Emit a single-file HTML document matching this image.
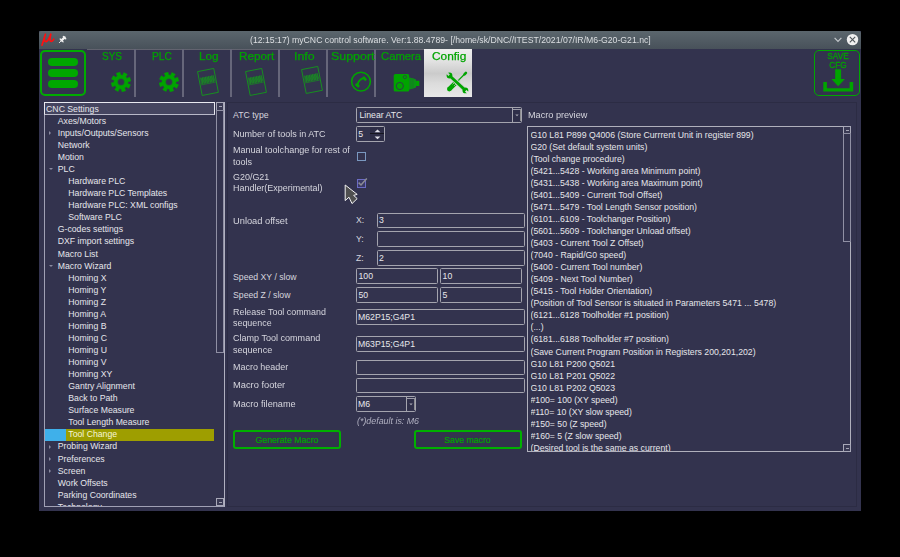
<!DOCTYPE html>
<html><head><meta charset="utf-8">
<style>
html,body{margin:0;padding:0;}
body{width:900px;height:557px;background:#000;position:relative;overflow:hidden;font-family:"Liberation Sans",sans-serif;}
.a{position:absolute;}
#win{left:39px;top:31px;width:822px;height:480px;background:#33334e;}
#title{left:39px;top:31px;width:822px;height:18px;background:linear-gradient(#5b666d,#48515a);border-radius:2px 2px 0 0;}
#ttext{left:250px;top:34.4px;font-size:8.7px;line-height:12px;color:#dcdfe2;will-change:transform;white-space:pre;}
.tabline{left:87px;top:48.5px;width:337px;height:1.5px;background:#62636f;}
.sep{top:49px;width:2px;height:48px;background:#66667a;}
.tl{top:49.2px;font-size:11.5px;line-height:14px;color:#00a400;white-space:pre;-webkit-text-stroke:0.25px #00a400;}
#cfgtab{left:424px;top:49px;width:48px;height:48px;background:linear-gradient(#eeeeee 0%,#e2e2e2 25%,#cbcbcb 51%,#dcdcdc 72%,#e8e8e8 100%);}
#menu{left:40px;top:49.5px;width:42px;height:42.5px;border:2px solid #00ad00;border-radius:5px;}
.bar{left:48px;width:30px;height:8px;border-radius:4px;background:#00a800;}
#save{left:813.8px;top:49.8px;width:46px;height:46px;box-sizing:border-box;border:1.8px solid #00a800;border-radius:5px;}
.t{position:absolute;font-size:8.7px;line-height:12px;color:#d6d6de;white-space:pre;}
.inp{position:absolute;border:1px solid #a4a4ae;border-radius:1.5px;box-sizing:border-box;}
.arr{width:0;height:0;border-left:2.5px solid #8a8aa0;border-top:2px solid transparent;border-bottom:2px solid transparent;}
.arrd{width:0;height:0;border-top:2.5px solid #8a8aa0;border-left:2px solid transparent;border-right:2px solid transparent;}
.tr{color:#e6e6ec;}
.it{position:absolute;font-size:8.7px;line-height:12px;color:#e8e8ec;white-space:pre;}
</style></head><body>
<div id="win" class="a"></div>
<div id="title" class="a"></div>
<!-- mu logo -->
<svg class="a" style="left:39px;top:31px" width="18" height="17" viewBox="39 31 18 17"><path d="M42,45.2 L45.4,34.2 M44.4,37.6 C43.6,40.6 45,42 46.6,41.4 C48.4,40.6 49.6,37 50.8,34.2 M50.8,34.2 C50,37.4 49.6,40.2 50.6,41.2 C51.4,41.9 52.8,41 53.8,39.2" stroke="#ff1010" stroke-width="1.7" fill="none" stroke-linecap="round"/></svg>
<svg class="a" style="left:56px;top:33px" width="12" height="12" viewBox="56 33 12 12"><g stroke="#f0f0f0" stroke-linecap="round" fill="none"><path d="M59.3,42.7 L61.4,40.6" stroke-width="0.9"/><path d="M60.2,39 L63.1,41.9" stroke-width="1.3"/><path d="M61.6,40.4 L64.6,37.4" stroke-width="2.2"/><path d="M63.4,36.4 L65.7,38.7" stroke-width="1.4"/></g></svg>
<div id="ttext" class="a">(12:15:17) myCNC control software. Ver:1.88.4789- [/home/sk/DNC//ITEST/2021/07/IR/M6-G20-G21.nc]</div>
<svg class="a" style="left:834px;top:37px" width="8" height="6" viewBox="0 0 8 6"><path d="M0.6,0.8 L4,4.4 L7.4,0.8" stroke="#c4c8cc" stroke-width="1.2" fill="none"/></svg>
<svg class="a" style="left:846px;top:33px" width="13" height="13" viewBox="0 0 13 13"><circle cx="6.5" cy="6.6" r="5.7" fill="#f0f0f0"/><path d="M3.8,3.9 L9.2,9.3 M9.2,3.9 L3.8,9.3" stroke="#4e5458" stroke-width="1.1"/></svg>

<!-- menu button -->
<div id="menu" class="a"></div>
<div class="a bar" style="top:58px"></div>
<div class="a bar" style="top:69px"></div>
<div class="a bar" style="top:80px"></div>

<!-- tabs -->
<div class="a tabline"></div>
<div class="a sep" style="left:134px"></div>
<div class="a sep" style="left:182px"></div>
<div class="a sep" style="left:230px"></div>
<div class="a sep" style="left:278px"></div>
<div class="a sep" style="left:326px"></div>
<div class="a sep" style="left:374px"></div>
<div id="cfgtab" class="a"></div>
<div class="a tl" style="left:102px;transform:scaleX(0.87);transform-origin:0 0">SYS</div>
<div class="a tl" style="left:151.5px;transform:scaleX(0.886);transform-origin:0 0">PLC</div>
<div class="a tl" style="left:198.5px;transform:scaleX(1.02);transform-origin:0 0">Log</div>
<div class="a tl" style="left:238.5px;transform:scaleX(1.02);transform-origin:0 0">Report</div>
<div class="a tl" style="left:294.2px;transform:scaleX(1.08);transform-origin:0 0">Info</div>
<div class="a tl" style="left:330.5px;transform:scaleX(1.08);transform-origin:0 0">Support</div>
<div class="a tl" style="left:380.5px;transform:scaleX(0.98);transform-origin:0 0">Camera</div>
<div class="a tl" style="left:431.5px;transform:scaleX(1.03);transform-origin:0 0">Config</div>

<!-- gears -->
<svg class="a" style="left:110.5px;top:72px" width="20" height="20" viewBox="0 0 20 20"><path fill="#00a400" stroke="#00a400" stroke-width="0.5" stroke-linejoin="round" fill-rule="evenodd" d="M6.40,4.00 L5.31,1.28 L9.01,0.15 L9.63,3.01 L11.70,3.21 L12.85,0.52 L16.26,2.33 L14.68,4.79 L16.00,6.40 L18.72,5.31 L19.85,9.01 L16.99,9.63 L16.79,11.70 L19.48,12.85 L17.67,16.26 L15.21,14.68 L13.60,16.00 L14.69,18.72 L10.99,19.85 L10.37,16.99 L8.30,16.79 L7.15,19.48 L3.74,17.67 L5.32,15.21 L4.00,13.60 L1.28,14.69 L0.15,10.99 L3.01,10.37 L3.21,8.30 L0.52,7.15 L2.33,3.74 L4.79,5.32Z M13.5,10 A3.5,3.5 0 1,0 6.5,10 A3.5,3.5 0 1,0 13.5,10Z"/></svg>
<svg class="a" style="left:158.5px;top:72px" width="20" height="20" viewBox="0 0 20 20"><path fill="#00a400" stroke="#00a400" stroke-width="0.5" stroke-linejoin="round" fill-rule="evenodd" d="M6.40,4.00 L5.31,1.28 L9.01,0.15 L9.63,3.01 L11.70,3.21 L12.85,0.52 L16.26,2.33 L14.68,4.79 L16.00,6.40 L18.72,5.31 L19.85,9.01 L16.99,9.63 L16.79,11.70 L19.48,12.85 L17.67,16.26 L15.21,14.68 L13.60,16.00 L14.69,18.72 L10.99,19.85 L10.37,16.99 L8.30,16.79 L7.15,19.48 L3.74,17.67 L5.32,15.21 L4.00,13.60 L1.28,14.69 L0.15,10.99 L3.01,10.37 L3.21,8.30 L0.52,7.15 L2.33,3.74 L4.79,5.32Z M13.5,10 A3.5,3.5 0 1,0 6.5,10 A3.5,3.5 0 1,0 13.5,10Z"/></svg>
<!-- docs -->
<svg class="a" style="left:195px;top:66px" width="26" height="32" viewBox="0 0 26 32"><g transform="translate(12.98,15.95) rotate(-11)" stroke="#16921e" fill="none"><rect x="-8.25" y="-12.15" width="16.5" height="24.3" stroke-width="0.9"/><path d="M-7,0.9 L-6.22,-5.5 L-5.44,0.9 L-4.66,-5.5 L-3.88,0.9 L-3.10,-5.5 L-2.32,0.9 L-1.54,-5.5 L-0.76,0.9 L0.02,-5.5 L0.80,0.9 L1.58,-5.5 L2.36,0.9 L3.14,-5.5 L3.92,0.9 L4.70,-5.5 L5.48,0.9 L6.26,-5.5 L7.04,0.9" stroke-width="0.7"/><path d="M-7.4,1.6 H7.6" stroke-width="0.6"/></g></svg>
<svg class="a" style="left:243px;top:66px" width="26" height="32" viewBox="0 0 26 32"><g transform="translate(12.98,15.95) rotate(-11)" stroke="#16921e" fill="none"><rect x="-8.25" y="-12.15" width="16.5" height="24.3" stroke-width="0.9"/><path d="M-7,0.9 L-6.22,-5.5 L-5.44,0.9 L-4.66,-5.5 L-3.88,0.9 L-3.10,-5.5 L-2.32,0.9 L-1.54,-5.5 L-0.76,0.9 L0.02,-5.5 L0.80,0.9 L1.58,-5.5 L2.36,0.9 L3.14,-5.5 L3.92,0.9 L4.70,-5.5 L5.48,0.9 L6.26,-5.5 L7.04,0.9" stroke-width="0.7"/><path d="M-7.4,1.6 H7.6" stroke-width="0.6"/></g></svg>
<svg class="a" style="left:299px;top:64px" width="26" height="32" viewBox="0 0 26 32"><g transform="translate(12.98,15.95) rotate(-11)" stroke="#16921e" fill="none"><rect x="-8.25" y="-12.15" width="16.5" height="24.3" stroke-width="0.9"/><path d="M-7,0.9 L-6.22,-5.5 L-5.44,0.9 L-4.66,-5.5 L-3.88,0.9 L-3.10,-5.5 L-2.32,0.9 L-1.54,-5.5 L-0.76,0.9 L0.02,-5.5 L0.80,0.9 L1.58,-5.5 L2.36,0.9 L3.14,-5.5 L3.92,0.9 L4.70,-5.5 L5.48,0.9 L6.26,-5.5 L7.04,0.9" stroke-width="0.7"/><path d="M-7.4,1.6 H7.6" stroke-width="0.6"/></g></svg>
<!-- support -->
<svg class="a" style="left:346px;top:68px" width="30" height="28" viewBox="346 68 30 28"><circle cx="361" cy="81.6" r="9.4" stroke="#00a400" stroke-width="1.6" fill="none"/><g fill="#00a400"><path d="M357.6,85 Q358.2,79.6 364,77.9" stroke="#00a400" stroke-width="2" fill="none"/><rect x="-2.3" y="-1.4" width="4.6" height="2.8" rx="0.9" transform="translate(364.6,78.6) rotate(50)"/><rect x="-2.3" y="-1.4" width="4.6" height="2.8" rx="0.9" transform="translate(357.4,85.4) rotate(40)"/></g></svg>
<!-- camera -->
<svg class="a" style="left:392px;top:73px" width="29" height="20" viewBox="0 0 29 20"><rect x="1.7" y="1.1" width="15.5" height="17.4" rx="1.6" fill="#00a400"/><circle cx="7.8" cy="13" r="3.6" fill="none" stroke="#33334e" stroke-width="0.9"/><circle cx="12.9" cy="4.1" r="1.6" fill="none" stroke="#33334e" stroke-width="0.7"/><path d="M17.2,4.4 L21,5.2 L23.9,6.6 V14.6 L21,15.6 L17.2,16.6Z" fill="#0a9a14"/><path d="M18.7,4.8 V16.2 M20.2,5 V15.9 M21.7,5.4 V15.5" stroke="#1a6f28" stroke-width="0.6"/><rect x="23.9" y="7.8" width="3.4" height="5.2" fill="#00a400"/></svg>
<!-- config -->
<svg class="a" style="left:442px;top:68px" width="30" height="28" viewBox="442 68 30 28"><defs><mask id="wm" maskUnits="userSpaceOnUse" x="442" y="68" width="30" height="28"><rect x="442" y="68" width="30" height="28" fill="#fff"/><rect x="-1.05" y="-4.5" width="2.1" height="4.3" fill="#000" transform="translate(449.3,75.3) rotate(-45)"/><rect x="-1.05" y="-4.5" width="2.1" height="4.3" fill="#000" transform="translate(465.6,90.6) rotate(135)"/></mask></defs>
<g stroke-linecap="round" fill="none">
<path d="M465.9,72.9 L464.5,74.3" stroke="#00a400" stroke-width="2.6"/>
<path d="M465,73.8 L458.4,80.4" stroke="#00a400" stroke-width="1.3"/>
<path d="M455.6,82.8 L449.3,89.1" stroke="#00a400" stroke-width="4.6" stroke-linecap="butt"/>
<circle cx="449.3" cy="89.1" r="2.3" fill="#00a400" stroke="none"/>
<path d="M454.4,82.6 L452.6,84.4 M455.9,84.1 L454.1,85.9" stroke="#d2d2d2" stroke-width="0.7" stroke-linecap="butt"/>
<path d="M451.3,77.3 L463.7,88.7" stroke="#d0d0d0" stroke-width="4.6" stroke-linecap="butt"/>
</g>
<g mask="url(#wm)" fill="#00a400"><path d="M451.3,77.3 L463.7,88.7" stroke="#00a400" stroke-width="2.9"/><circle cx="449.5" cy="75.5" r="2.9"/><circle cx="465.4" cy="90.4" r="2.9"/></g>
<path d="M457.2,79.6 L459.4,81.6 M458,78.8 L460.2,80.8" stroke="#7fc87f" stroke-width="0.5"/>
</svg>
<!-- save cfg -->
<div id="save" class="a"></div>
<div class="a" style="left:817.5px;top:51.6px;font-size:9.8px;line-height:8.9px;color:#00a400;text-align:center;width:40px;transform:scaleX(0.84);-webkit-text-stroke:0.3px #00a400;">SAVE<br>CFG</div>
<svg class="a" style="left:822px;top:68px" width="32" height="25" viewBox="0 0 32 25"><path d="M13.2,1.2 H19.1 V11 H22.9 L16.15,18.2 L9.4,11 H13.2Z" fill="#00a400"/><path d="M1.3,14 H4.9 V20.2 H27.6 V14 H31.2 V23.6 H1.3Z" fill="#00a400"/></svg>

<!-- content frame -->
<div class="a" style="left:227px;top:102px;width:628px;height:403px;border:1px solid #2c2c44;"></div>
<!-- tree -->
<div class="a" style="left:44px;top:102px;width:178.5px;height:403.5px;border:1px solid #a0a0b4;border-right:1.3px solid #b0b0c0;border-top:none;"></div>
<div class="a" style="left:44px;top:102px;width:171px;height:13px;box-sizing:border-box;border:1.3px solid #e8e8f0;border-bottom-color:#b8b8c8;background:#454560;"></div>
<div class="a" style="left:44.5px;top:428.9px;width:21.7px;height:11.8px;background:#3fb0ea;"></div>
<div class="a" style="left:66.2px;top:428.9px;width:148.3px;height:11.8px;background:#9e9e00;"></div>
<!-- tree scrollbar -->
<div class="a" style="left:216px;top:102px;width:8.3px;height:8.5px;box-sizing:border-box;border:1px solid #a8a8b8;background:#3a3a54;"></div>
<div class="a" style="left:219px;top:105.8px;width:3px;height:1px;background:#a4a4b4;"></div>
<div class="a" style="left:216px;top:110px;width:8px;height:243px;box-sizing:border-box;border:1px solid #9090a4;"></div>
<div class="a" style="left:216px;top:498.2px;width:8.3px;height:8.3px;box-sizing:border-box;border:1px solid #a8a8b8;background:#3a3a54;"></div>
<div class="a" style="left:219px;top:502px;width:3px;height:1px;background:#a4a4b4;"></div>
<div class="a" style="left:44px;top:115px;width:172px;height:390.5px;overflow:hidden;">
<div class="a" style="left:-44px;top:-115px;width:300px;height:520px;">

<div class="t tr" style="left:57.8px;top:114.86px">Axes/Motors</div>
<div class="t tr" style="left:57.8px;top:126.92px">Inputs/Outputs/Sensors</div>
<div class="a arr" style="left:49px;top:131.42px"></div>
<div class="t tr" style="left:57.8px;top:138.98px">Network</div>
<div class="t tr" style="left:57.8px;top:151.04px">Motion</div>
<div class="t tr" style="left:57.8px;top:163.10px">PLC</div>
<div class="a arrd" style="left:48.5px;top:168.10px"></div>
<div class="t tr" style="left:68.3px;top:175.16px">Hardware PLC</div>
<div class="t tr" style="left:68.3px;top:187.22px">Hardware PLC Templates</div>
<div class="t tr" style="left:68.3px;top:199.28px">Hardware PLC: XML configs</div>
<div class="t tr" style="left:68.3px;top:211.34px">Software PLC</div>
<div class="t tr" style="left:57.8px;top:223.40px">G-codes settings</div>
<div class="t tr" style="left:57.8px;top:235.46px">DXF import settings</div>
<div class="t tr" style="left:57.8px;top:247.52px">Macro List</div>
<div class="t tr" style="left:57.8px;top:259.58px">Macro Wizard</div>
<div class="a arrd" style="left:48.5px;top:264.58px"></div>
<div class="t tr" style="left:68.3px;top:271.64px">Homing X</div>
<div class="t tr" style="left:68.3px;top:283.70px">Homing Y</div>
<div class="t tr" style="left:68.3px;top:295.76px">Homing Z</div>
<div class="t tr" style="left:68.3px;top:307.82px">Homing A</div>
<div class="t tr" style="left:68.3px;top:319.88px">Homing B</div>
<div class="t tr" style="left:68.3px;top:331.94px">Homing C</div>
<div class="t tr" style="left:68.3px;top:344.00px">Homing U</div>
<div class="t tr" style="left:68.3px;top:356.06px">Homing V</div>
<div class="t tr" style="left:68.3px;top:368.12px">Homing XY</div>
<div class="t tr" style="left:68.3px;top:380.18px">Gantry Alignment</div>
<div class="t tr" style="left:68.3px;top:392.24px">Back to Path</div>
<div class="t tr" style="left:68.3px;top:404.30px">Surface Measure</div>
<div class="t tr" style="left:68.3px;top:416.36px">Tool Length Measure</div>
<div class="t tr" style="left:68.3px;top:428.42px;color:#f6f6d8">Tool Change</div>
<div class="t tr" style="left:57.8px;top:440.48px">Probing Wizard</div>
<div class="a arr" style="left:49px;top:444.98px"></div>
<div class="t tr" style="left:57.8px;top:452.54px">Preferences</div>
<div class="a arr" style="left:49px;top:457.04px"></div>
<div class="t tr" style="left:57.8px;top:464.60px">Screen</div>
<div class="a arr" style="left:49px;top:469.10px"></div>
<div class="t tr" style="left:57.8px;top:476.66px">Work Offsets</div>
<div class="t tr" style="left:57.8px;top:488.72px">Parking Coordinates</div>
<div class="t tr" style="left:57.8px;top:500.78px">Technology</div>
</div></div>
<div class="t tr" style="left:46.1px;top:102.8px">CNC Settings</div>

<!-- labels -->
<div class="t" style="left:233px;top:109.3px">ATC type</div>
<div class="t" style="left:233px;top:127.7px;transform:scaleX(1.039);transform-origin:0 0">Number of tools in ATC</div>
<div class="t" style="left:233px;top:145.2px;line-height:11.4px;transform:scaleX(1.038);transform-origin:0 0">Manual toolchange for rest of<br>tools</div>
<div class="t" style="left:233px;top:171.8px;line-height:11.2px;transform:scaleX(1.03);transform-origin:0 0">G20/G21<br>Handler(Experimental)</div>
<div class="t" style="left:233px;top:214.5px;transform:scaleX(1.07);transform-origin:0 0">Unload offset</div>
<div class="t" style="left:356px;top:214px">X:</div>
<div class="t" style="left:356px;top:232.8px">Y:</div>
<div class="t" style="left:356px;top:251.7px">Z:</div>
<div class="t" style="left:233px;top:270.5px">Speed XY / slow</div>
<div class="t" style="left:233px;top:289px">Speed Z / slow</div>
<div class="t" style="left:233px;top:306.8px;line-height:11.5px;transform:scaleX(1.025);transform-origin:0 0">Release Tool command<br>sequence</div>
<div class="t" style="left:233px;top:333px;line-height:11.5px;transform:scaleX(1.04);transform-origin:0 0">Clamp Tool command<br>sequence</div>
<div class="t" style="left:233px;top:360.8px;transform:scaleX(1.03);transform-origin:0 0">Macro header</div>
<div class="t" style="left:233px;top:379.3px;transform:scaleX(1.07);transform-origin:0 0">Macro footer</div>
<div class="t" style="left:233px;top:397.7px;transform:scaleX(1.055);transform-origin:0 0">Macro filename</div>
<div class="t" style="left:528.3px;top:109px;transform:scaleX(1.05);transform-origin:0 0">Macro preview</div>

<!-- inputs -->
<div class="inp" style="left:356px;top:107px;width:166px;height:16px;"></div>
<div class="a" style="left:512px;top:108px;width:9px;height:14px;box-sizing:border-box;border-left:1px solid #a4a4ae;"></div>
<div class="a" style="left:513px;top:109px;width:7.5px;height:12px;box-sizing:border-box;border-top:1px solid #9c9ca8;border-right:1px solid #8c8c90;background:#2f2f49;"></div>
<svg class="a" style="left:514.5px;top:114px" width="4" height="3" viewBox="0 0 4 3"><path d="M0.3,0.6 H3.7 L2,2.2Z" fill="#a8a8b4"/></svg>
<div class="it" style="left:359.5px;top:108.6px">Linear ATC</div>
<div class="inp" style="left:356px;top:126px;width:29px;height:16px;"></div>
<div class="a" style="left:370px;top:127px;width:14px;height:14px;background:#2e2e47;"></div>
<div class="a" style="left:370px;top:133px;width:14px;height:1px;background:#15151f;"></div>
<svg class="a" style="left:373.5px;top:128.5px" width="7" height="11" viewBox="0 0 7 11"><path d="M0.6,3.2 H6.4 L3.5,0.4Z M0.6,7.4 H6.4 L3.5,10.2Z" fill="#e0e0e8"/></svg>
<div class="it" style="left:358.3px;top:127.7px">5</div>
<div class="a" style="left:357px;top:152px;width:9px;height:9px;box-sizing:border-box;border:1.1px solid #7a98c0;"></div>
<div class="a" style="left:357px;top:178.6px;width:9px;height:9.2px;box-sizing:border-box;border:1.1px solid #6c6cc4;background:#3a3a66;"></div>
<svg class="a" style="left:356px;top:174px" width="14" height="14" viewBox="0 0 14 14"><path d="M2.6,8.6 L5,11 L10.8,4.4" stroke="#8c8c94" stroke-width="1.5" fill="none"/></svg>
<!-- cursor -->
<svg class="a" style="left:344px;top:184px" width="15" height="21" viewBox="0 0 15 21"><path d="M1.2,1 L1.2,16.6 L5,13.2 L8,19.6 L13.2,14.6 L9.6,11.4 L13.2,10.4Z" fill="#505050" stroke="#f4f4f4" stroke-width="1"/></svg>

<div class="inp" style="left:377px;top:212.5px;width:148px;height:15.5px;"></div>
<div class="inp" style="left:377px;top:231.4px;width:148px;height:15.4px;"></div>
<div class="inp" style="left:377px;top:250.2px;width:148px;height:15.5px;"></div>
<div class="it" style="left:379.1px;top:214px">3</div>
<div class="it" style="left:379.1px;top:251.7px">2</div>
<div class="inp" style="left:356px;top:268.2px;width:81.5px;height:15.8px;"></div>
<div class="inp" style="left:440px;top:268.2px;width:82px;height:15.8px;"></div>
<div class="inp" style="left:356px;top:287px;width:81.5px;height:15.8px;"></div>
<div class="inp" style="left:440px;top:287px;width:82px;height:15.8px;"></div>
<div class="it" style="left:358.5px;top:269.6px">100</div>
<div class="it" style="left:442.6px;top:269.6px">10</div>
<div class="it" style="left:358.5px;top:288.5px">50</div>
<div class="it" style="left:442.6px;top:288.5px">5</div>
<div class="inp" style="left:356px;top:309.3px;width:169px;height:15.3px;"></div>
<div class="inp" style="left:356px;top:336.2px;width:169px;height:15.7px;"></div>
<div class="inp" style="left:356px;top:359.6px;width:169px;height:15.3px;"></div>
<div class="inp" style="left:356px;top:377.8px;width:169px;height:15.3px;"></div>
<div class="it" style="left:358px;top:310.9px">M62P15;G4P1</div>
<div class="it" style="left:358px;top:337.7px">M63P15;G4P1</div>
<div class="inp" style="left:356px;top:396.3px;width:60px;height:15.5px;"></div>
<div class="a" style="left:406px;top:397.3px;width:9px;height:13.5px;box-sizing:border-box;border-left:1px solid #a4a4ae;"></div>
<div class="a" style="left:407px;top:398.3px;width:7.5px;height:12px;box-sizing:border-box;border-top:1px solid #9c9ca8;border-right:1px solid #8c8c90;background:#2f2f49;"></div>
<svg class="a" style="left:408.5px;top:403px" width="4" height="3" viewBox="0 0 4 3"><path d="M0.3,0.6 H3.7 L2,2.2Z" fill="#a8a8b4"/></svg>
<div class="it" style="left:358px;top:398px">M6</div>
<div class="t" style="left:356.5px;top:415.2px;font-style:italic;color:#b0b0c0;transform:scaleX(1.02);transform-origin:0 0">(*)default is: M6</div>
<!-- buttons -->
<div class="a" style="left:233px;top:430px;width:108px;height:19px;box-sizing:border-box;border:2px solid #00b000;border-radius:3px;"></div>
<div class="t" style="left:233px;top:433.5px;width:108px;text-align:center;color:#00a400;-webkit-text-stroke:0.2px #00a400">Generate Macro</div>
<div class="a" style="left:414px;top:430px;width:107.5px;height:19px;box-sizing:border-box;border:2px solid #00b000;border-radius:3px;"></div>
<div class="t" style="left:413.7px;top:433.5px;width:107.6px;text-align:center;color:#00a400;-webkit-text-stroke:0.2px #00a400">Save macro</div>
<!-- macro preview -->
<div class="a" style="left:527.3px;top:126.1px;width:323.7px;height:325.8px;box-sizing:border-box;border:1.2px solid #b0b0bc;"></div>
<div class="a" style="left:843.2px;top:126.1px;width:7.8px;height:7.6px;box-sizing:border-box;border:1px solid #a8a8b8;background:#3a3a54;"></div>
<div class="a" style="left:845.5px;top:129.5px;width:3px;height:1px;background:#a4a4b4;"></div>
<div class="a" style="left:843.2px;top:133.4px;width:7.6px;height:108.5px;box-sizing:border-box;border:1px solid #9090a4;"></div>
<div class="a" style="left:843.2px;top:444.3px;width:7.8px;height:7.6px;box-sizing:border-box;border:1px solid #a8a8b8;background:#3a3a54;"></div>
<div class="a" style="left:845.5px;top:447.8px;width:3px;height:1px;background:#a4a4b4;"></div>
<div class="a" style="left:530.5px;top:128.7px;width:312px;height:322px;overflow:hidden;">
<div class="t" style="position:relative;line-height:12.04px;color:#e6e6ea">G10 L81 P899 Q4006 (Store Currrent Unit in register 899)<br>G20 (Set default system units)<br>(Tool change procedure)<br>(5421...5428 - Working area Minimum point)<br>(5431...5438 - Working area Maximum point)<br>(5401...5409 - Current Tool Offset)<br>(5471...5479 - Tool Length Sensor position)<br>(6101...6109 - Toolchanger Position)<br>(5601...5609 - Toolchanger Unload offset)<br>(5403 - Current Tool Z Offset)<br>(7040 - Rapid/G0 speed)<br>(5400 - Current Tool number)<br>(5409 - Next Tool Number)<br>(5415 - Tool Holder Orientation)<br>(Position of Tool Sensor is situated in Parameters 5471 ... 5478)<br>(6121...6128 Toolholder #1 position)<br>(...)<br>(6181...6188 Toolholder #7 position)<br>(Save Current Program Position in Registers 200,201,202)<br>G10 L81 P200 Q5021<br>G10 L81 P201 Q5022<br>G10 L81 P202 Q5023<br>#100= 100 (XY speed)<br>#110= 10 (XY slow speed)<br>#150= 50 (Z speed)<br>#160= 5 (Z slow speed)<br>(Desired tool is the same as current)</div></div>

</body></html>
